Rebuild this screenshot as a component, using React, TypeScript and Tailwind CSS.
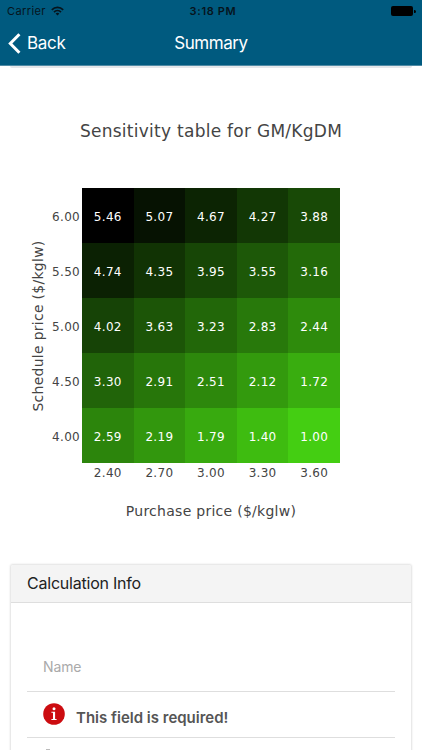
const purchasePrices = ["2.40", "2.70", "3.00", "3.30", "3.60"];

const rows = [
  { price: "6.00", values: [5.46, 5.07, 4.67, 4.27, 3.88] },
  { price: "5.50", values: [4.74, 4.35, 3.95, 3.55, 3.16] },
  { price: "5.00", values: [4.02, 3.63, 3.23, 2.83, 2.44] },
  { price: "4.50", values: [3.3, 2.91, 2.51, 2.12, 1.72] },
  { price: "4.00", values: [2.59, 2.19, 1.79, 1.4, 1.0] },
];

const MIN = 1;
const MAX = 5.46;

// green at the lowest margin, black at the highest
function cellColor(value: number) {
  const t = (MAX - value) / (MAX - MIN);
  return `rgb(${Math.round(68 * t)}, ${Math.round(206 * t)}, ${Math.round(18 * t)})`;
}

function StatusBar() {
  return (
    <div className="grid h-5 grid-cols-3 items-center pl-[7px] pr-[6px] pt-[2px] text-[11px] text-[#06141c]">
      <div className="flex items-center gap-[5px]">
        <span className="tracking-[0.4px]">Carrier</span>
        <svg width="13" height="10" viewBox="0 0 13 10" fill="none" stroke="currentColor" strokeWidth="1.7">
          <path d="M0.8 3.8a8.1 8.1 0 0 1 11.4 0" />
          <path d="M3 6.1a5 5 0 0 1 7 0" />
          <path d="M6.5 9.5 4.6 7.6a2.7 2.7 0 0 1 3.8 0z" fill="currentColor" stroke="none" />
        </svg>
      </div>
      <span className="pl-[3px] text-center font-semibold tracking-[0.65px]">3:18 PM</span>
      <div className="flex items-center justify-end gap-px text-black">
        <div className="h-[10px] w-[22px] rounded-[2px] bg-black" />
        <div className="h-[3px] w-[1.5px] rounded-r-full bg-black" />
      </div>
    </div>
  );
}

function NavBar() {
  return (
    <div className="grid h-[45px] grid-cols-3 items-center px-[8px] pt-[2px] text-[17px] text-white">
      <button className="flex items-center gap-[6px] text-left">
        <svg width="13" height="21" viewBox="0 0 13 21" fill="none" stroke="currentColor" strokeWidth="3">
          <path d="M11.4 1.2 2.3 10.5l9.1 9.3" />
        </svg>
        <span className="tracking-[-0.3px]">Back</span>
      </button>
      <h1 className="text-center tracking-[-0.45px]">Summary</h1>
    </div>
  );
}

function SensitivityChart() {
  return (
    <section className="h-[497px] font-['DejaVu_Sans',Verdana,sans-serif] text-[#444]">
      <h2 className="pt-[52px] text-center text-[17px] leading-[24px] tracking-[0.27px]">
        Sensitivity table for GM/KgDM
      </h2>
      <div className="mt-[45px] flex h-[275px]">
        <div className="ml-[28px] flex w-[20px] items-center justify-center">
          <span className="-rotate-90 whitespace-nowrap text-[14px] leading-[20px] tracking-[0.27px]">
            Schedule price ($/kglw)
          </span>
        </div>
        <div className="flex w-[34px] flex-col pr-[2px] text-right text-[12px] tracking-[0.3px]">
          {rows.map((row) => (
            <div key={row.price} className="flex flex-1 items-center justify-end pt-[3px]">
              {row.price}
            </div>
          ))}
        </div>
        <div className="grid w-[258px] grid-cols-5 grid-rows-5 text-[12px] tracking-[0.3px] text-white">
          {rows.map((row) =>
            row.values.map((value, i) => (
              <div
                key={`${row.price}-${i}`}
                className="flex items-center justify-center pt-[2px]"
                style={{ backgroundColor: cellColor(value) }}
              >
                {value.toFixed(2)}
              </div>
            ))
          )}
        </div>
      </div>
      <div className="ml-[82px] grid w-[258px] grid-cols-5 pt-[2px] text-center text-[12px] leading-[17px] tracking-[0.3px]">
        {purchasePrices.map((price) => (
          <span key={price}>{price}</span>
        ))}
      </div>
      <p className="mt-[19px] text-center text-[14px] leading-[20px] tracking-[0.27px]">
        Purchase price ($/kglw)
      </p>
    </section>
  );
}

function CalculationInfo() {
  return (
    <section className="mx-[11px] mt-[1px] h-[220px] rounded-t-[2px] bg-white shadow-[0_0_2px_1px_rgba(0,0,0,0.12)]">
      <h2 className="h-[38px] rounded-t-[2px] border-b border-[#dedede] bg-[#f4f4f4] pl-[16px] text-[16px] leading-[37px] tracking-[-0.22px] text-[#222]">
        Calculation Info
      </h2>
      <div className="px-[16px]">
        <div className="flex h-[89px] items-end border-b border-[#dedede] pb-[13px] pl-[16px] text-[14px] text-[#aaa]">
          <span className="leading-[22px] tracking-[-0.1px]">Name</span>
        </div>
        <div className="flex h-[46px] border-b border-[#dedede] pl-[16px]">
          <svg className="mt-[11px]" width="22" height="22" viewBox="0 0 22 22">
            <circle cx="11" cy="11" r="10.8" fill="#cc0c10" />
            <circle cx="11" cy="5.7" r="1.5" fill="#fff" />
            <path d="M8.4 8.8h3.7v7.2h1.5v1H8.4v-1h1.6V9.8H8.4z" fill="#fff" />
          </svg>
          <span className="ml-[11px] mt-[15px] text-[15px] font-semibold leading-[22px] text-[#555]">
            This field is required!
          </span>
        </div>
        {/* top edge of the next row */}
        <div className="ml-[19px] mt-[11px] h-px w-[4px] bg-[#bbb]" />
      </div>
    </section>
  );
}

export default function App() {
  return (
    <div className="h-[750px] w-[422px] overflow-hidden bg-white font-[Inter,sans-serif]">
      <header className="h-[66px] border-b border-[#4f8ba5] bg-[#005a7f]">
        <StatusBar />
        <NavBar />
      </header>
      {/* bottom edge of the card scrolled under the header */}
      <div className="mx-[10px] h-[2px] rounded-b-[2px] bg-[#e4e7ea]" />
      <div className="-mt-px">
        <SensitivityChart />
      </div>
      <CalculationInfo />
    </div>
  );
}
